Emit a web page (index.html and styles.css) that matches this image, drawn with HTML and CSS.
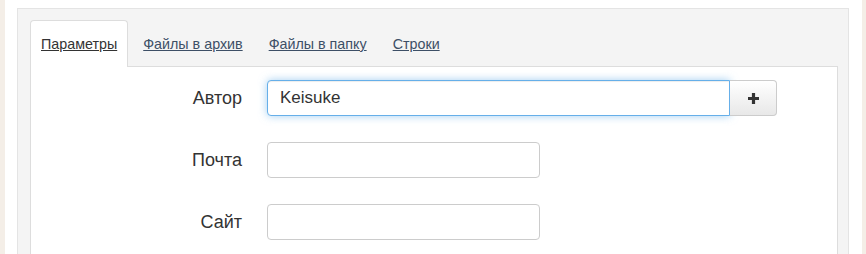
FILE: index.html
```html
<!DOCTYPE html>
<html lang="ru">
<head>
  <meta charset="UTF-8">
  <meta name="viewport" content="width=device-width, initial-scale=1.0">
  <title>Параметры</title>
  <link rel="stylesheet" href="styles.css">
</head>
<body>
  <div class="page">
    <div class="panel">
      <ul class="tabs">
        <li><a href="#params" class="active">Параметры</a></li>
        <li><a href="#archive">Файлы в архив</a></li>
        <li><a href="#folder">Файлы в папку</a></li>
        <li><a href="#strings">Строки</a></li>
      </ul>
      <div class="tab-content">
        <form class="form">
          <label for="author">Автор</label>
          <div class="input-group">
            <input type="text" id="author" class="focused" value="Keisuke">
            <button type="button" class="add-btn" title="Добавить">
              <svg width="13" height="13" viewBox="0 0 13 13">
                <path d="M6.5 1v11M1 6.5h11" stroke="#333" stroke-width="3.2"/>
              </svg>
            </button>
          </div>
          <label for="email">Почта</label>
          <input type="text" id="email" class="short">
          <label for="site">Сайт</label>
          <input type="text" id="site" class="short">
        </form>
      </div>
    </div>
  </div>
</body>
</html>
```

FILE: styles.css
```css
:root {
  --text-color: #333;
  --link-color: #3d4f66;
  --border-color: #ddd;
  --focus-color: #66afe9;
}

body {
  margin: 0;
  background: #f4eee7;
  font-family: 'Liberation Sans', Arial, sans-serif;
  color: var(--text-color);
}

.page {
  margin: 0 4px 0 5px;
  background: #fff;
  padding: 8px 13px 0 12px;
  height: 100vh;
  box-sizing: border-box;
  overflow: hidden;
}

.panel {
  background: #f4f4f4;
  border: 1px solid #e4e4e4;
  padding: 11px 10px 0 12px;
}

.tabs {
  display: flex;
  list-style: none;
  margin: 0;
  padding: 0;
  border-bottom: 1px solid var(--border-color);
}

.tabs a {
  display: block;
  padding: 0 10px;
  margin-right: 4px;
  margin-bottom: -1px;
  line-height: 46px;
  font-size: 14.3px;
  color: var(--link-color);
  border: 1px solid transparent;
  border-bottom: 0;
  border-radius: 4px 4px 0 0;
}

.tabs a.active {
  background: #fff;
  color: var(--text-color);
  border-color: var(--border-color);
}

.tab-content {
  background: #fff;
  border: 1px solid var(--border-color);
  border-top: 0;
  padding: 13px 0 20px;
}

.form {
  display: grid;
  grid-template-columns: 211px auto;
  column-gap: 25px;
  row-gap: 26px;
  align-items: center;
  justify-items: start;
}

.form label {
  justify-self: end;
  font-size: 18px;
}

.form input {
  box-sizing: border-box;
  height: 36px;
  padding: 0 12px;
  border: 1px solid #ccc;
  border-radius: 4px;
  font-family: inherit;
  font-size: 17px;
  color: var(--text-color);
  outline: none;
}

.form input.short {
  width: 273px;
}

.input-group {
  display: flex;
}

.input-group input {
  width: 463px;
  border-radius: 4px 0 0 4px;
}

.form input.focused {
  border-color: var(--focus-color);
  box-shadow: inset 0 1px 1px rgba(0, 0, 0, 0.075), 0 0 8px rgba(102, 175, 233, 0.6);
}

.add-btn {
  width: 47px;
  height: 36px;
  display: flex;
  align-items: center;
  justify-content: center;
  border: 1px solid #ccc;
  border-left: 0;
  border-radius: 0 4px 4px 0;
  background: linear-gradient(#fff, #e8e8e8);
  padding: 0;
  cursor: pointer;
}
```
